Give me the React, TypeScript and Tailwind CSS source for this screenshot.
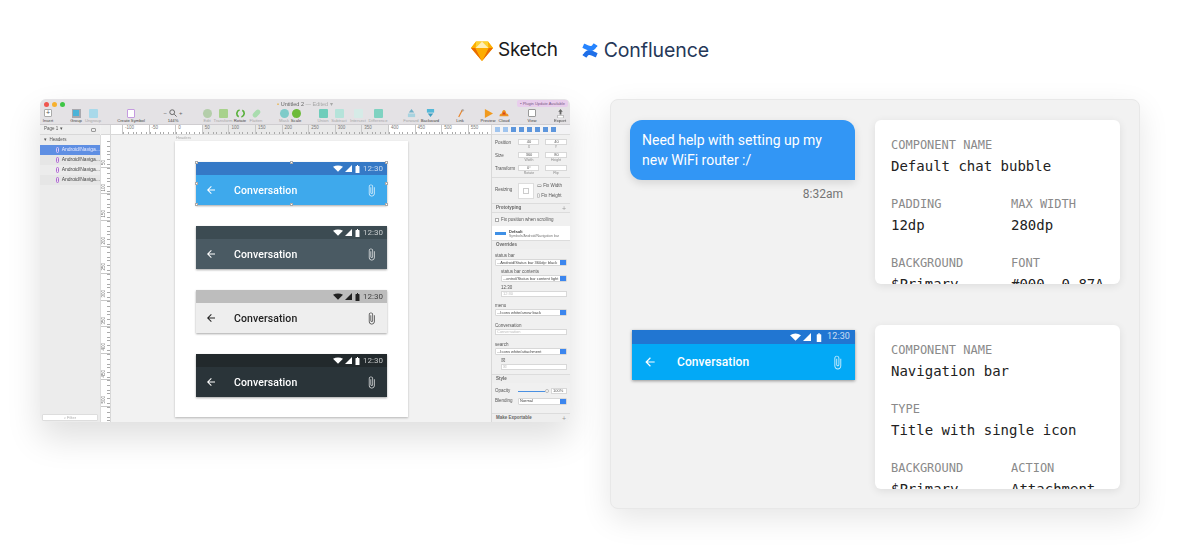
import React from "react";

const ATTACH = "M16.5 6v11.5c0 2.21-1.79 4-4 4s-4-1.79-4-4V5c0-1.38 1.12-2.5 2.5-2.5s2.5 1.12 2.5 2.5v10.5c0 .55-.45 1-1 1s-1-.45-1-1V6H10v9.5c0 1.38 1.12 2.5 2.5 2.5s2.5-1.12 2.5-2.5V5c0-2.21-1.79-4-4-4S7 2.79 7 5v12.5c0 3.04 2.46 5.5 5.5 5.5s5.5-2.46 5.5-5.5V6h-1.5z";
const BACK = "M20 11H7.83l5.59-5.59L12 4l-8 8 8 8 1.41-1.41L7.83 13H20v-2z";

function Ico({ d, c }: { d: string; c: string }) {
  return (
    <svg viewBox="0 0 24 24" className={c} fill="currentColor">
      <path d={d} />
    </svg>
  );
}

function SketchLogo() {
  return (
    <svg viewBox="0 0 22 20" className="w-[22px] h-[20px]">
      <polygon points="5,0.5 17,0.5 22,7 11,20 0,7" fill="#fdb300" />
      <polygon points="0,7 4.5,7 11,20" fill="#ea6c00" />
      <polygon points="22,7 17.5,7 11,20" fill="#ea6c00" />
      <polygon points="4.5,7 17.5,7 11,20" fill="#fdad00" />
      <polygon points="5,0.5 4.5,7 11,0.5" fill="#fdd231" />
      <polygon points="17,0.5 17.5,7 11,0.5" fill="#fdd231" />
      <polygon points="5,0.5 4.5,7 0,7" fill="#fdad00" />
      <polygon points="17,0.5 17.5,7 22,7" fill="#fdad00" />
      <polygon points="11,0.5 17.5,7 4.5,7" fill="#feeeb7" />
    </svg>
  );
}

function ConfluenceLogo() {
  const d = "M2.3 23.1c-.3.5-.7 1.1-1 1.6-.3.5-.1 1.1.4 1.4l6.4 3.9c.5.3 1.1.1 1.4-.3.3-.4.6-1 1-1.7 2.6-4.2 5.1-3.7 9.7-1.5l6.4 3c.5.2 1.1 0 1.4-.5l3-6.9c.2-.5 0-1.1-.5-1.3-1.4-.6-4-1.9-6.4-3-8.5-4.1-15.7-3.9-21.2 5.3z";
  return (
    <svg viewBox="0 0 32 32" className="w-[16px] h-[17px]">
      <path d={d} fill="#1f6fe8" />
      <path d={d} fill="#2684ff" transform="rotate(180 16 16)" />
    </svg>
  );
}

function SmallBar({ status, main, fg, dark }: { status: string; main: string; fg: string; dark?: boolean }) {
  return (
    <div className={`w-[191px] h-[43px] flex flex-col shadow-[0_1px_2px_rgba(0,0,0,0.35)] ${fg}`}>
      <div className={`h-[13px] flex items-center justify-end pr-[4px] ${status}`}>
        <svg viewBox="0 0 24 16" className="w-[10px] h-[7px] mr-[2px]" fill="currentColor"><path d="M0 4Q12 -3 24 4L12 16Z" /></svg>
        <svg viewBox="0 0 16 16" className="w-[7px] h-[7px] mr-[3px]" fill="currentColor"><path d="M0 16L16 0V16Z" /></svg>
        <svg viewBox="0 0 10 16" className="w-[5px] h-[8px] mr-[3px]" fill="currentColor"><path d="M2 2h2V0h2v2h2q1 0 1 1v13H1V3q0-1 1-1z" /></svg>
        <span className={`text-[8px] font-[Roboto,sans-serif] ${dark ? "opacity-80" : "opacity-70"}`}>12:30</span>
      </div>
      <div className={`flex-1 flex items-center ${main}`}>
        <Ico d={BACK} c="w-[12px] h-[12px] ml-[9px]" />
        <span className="ml-[17px] mt-[1px] text-[10.5px] font-medium font-[Roboto,sans-serif] tracking-[0.1px]">Conversation</span>
        <Ico d={ATTACH} c="w-[13px] h-[13px] ml-auto mr-[9px] opacity-80" />
      </div>
    </div>
  );
}

function BigBar() {
  return (
    <div className="ml-[2px] mt-[5px] w-[223px] h-[50px] flex flex-col text-white shadow-[0_1px_3px_rgba(0,0,0,0.4)]">
      <div className="h-[14px] bg-[#2176d2] flex items-center justify-end pr-[5px]">
        <svg viewBox="0 0 24 16" className="w-[11px] h-[8px] mr-[2px]" fill="currentColor"><path d="M0 4Q12 -3 24 4L12 16Z" /></svg>
        <svg viewBox="0 0 16 16" className="w-[8px] h-[8px] mr-[5px]" fill="currentColor"><path d="M0 16L16 0V16Z" /></svg>
        <svg viewBox="0 0 10 16" className="w-[6px] h-[9px] mr-[5px]" fill="currentColor"><path d="M2 2h2V0h2v2h2q1 0 1 1v13H1V3q0-1 1-1z" /></svg>
        <span className="text-[9px] font-[Roboto,sans-serif] opacity-75 tracking-[0.1px]">12:30</span>
      </div>
      <div className="flex-1 bg-[#03a9f6] flex items-center">
        <Ico d={BACK} c="w-[14px] h-[14px] ml-[11px]" />
        <span className="ml-[20px] text-[12px] font-medium font-[Roboto,sans-serif] tracking-[0.1px]">Conversation</span>
        <Ico d={ATTACH} c="w-[15px] h-[15px] ml-auto mr-[10px] opacity-80" />
      </div>
    </div>
  );
}

function Tool({ w, ml, label, strong, children }: { w: string; ml: string; label: string; strong?: boolean; children: React.ReactNode }) {
  return (
    <div className={`${w} ${ml} shrink-0 flex flex-col items-center`}>
      <div className="h-[10px] flex items-center justify-center">{children}</div>
      <span className={`text-[4.2px] leading-[5px] whitespace-nowrap ${strong ? "text-[#444]" : "text-[#a5a5a5]"}`}>{label}</span>
    </div>
  );
}

function Sq({ c, r }: { c: string; r?: string }) {
  return <div className={`w-[9px] h-[9px] ${c} ${r ?? "rounded-[1px]"}`} />;
}

function Toolbar() {
  return (
    <div className="flex h-[15px] items-start">
      <Tool w="w-[16px]" ml="ml-0" label="Insert" strong>
        <div className="w-[8px] h-[8px] bg-white border border-[#aaa] rounded-[1px] text-[7px] leading-[6px] text-center text-[#555]">+</div>
      </Tool>
      <Tool w="w-[16px]" ml="ml-[12px]" label="Group" strong><div className="w-[9px] h-[9px] bg-[#a8a8ae] p-[1.5px]"><div className="w-full h-full bg-[#4bb3d8]" /></div></Tool>
      <Tool w="w-[16px]" ml="ml-[1px]" label="Ungroup"><Sq c="bg-[#a9d9ea]" /></Tool>
      <Tool w="w-[32px]" ml="ml-[14px]" label="Create Symbol" strong><div className="w-[8px] h-[9px] bg-white border border-[#c59be0] rounded-[1px]" /></Tool>
      <Tool w="w-[32px]" ml="ml-[10px]" label="144%" strong>
        <div className="flex items-center gap-[2px] text-[#666] text-[6px] leading-none">
          <span>−</span>
          <svg viewBox="0 0 10 10" className="w-[8px] h-[8px]" fill="none" stroke="#666" strokeWidth="1.2"><circle cx="4" cy="4" r="3" /><path d="M6.5 6.5L9.5 9.5" /></svg>
          <span>+</span>
        </div>
      </Tool>
      <Tool w="w-[16px]" ml="ml-[10px]" label="Edit"><Sq c="bg-[#b4ceaa]" r="rounded-full" /></Tool>
      <Tool w="w-[16px]" ml="ml-0" label="Transform"><Sq c="bg-[#a8d28c]" /></Tool>
      <Tool w="w-[16px]" ml="ml-[1px]" label="Rotate" strong>
        <svg viewBox="0 0 10 10" className="w-[9px] h-[9px]" fill="none" stroke="#58b03a" strokeWidth="1.8"><path d="M4 1.2A4 4 0 0 0 3 8.6M6 8.8A4 4 0 0 0 7 1.4" /></svg>
      </Tool>
      <Tool w="w-[16px]" ml="ml-0" label="Flatten"><div className="w-[9px] h-[5px] bg-[#a9dcae] rounded-full -rotate-45" /></Tool>
      <Tool w="w-[12px]" ml="ml-[14px]" label="Mask"><Sq c="bg-[#7fcbc9]" r="rounded-full" /></Tool>
      <Tool w="w-[12px]" ml="ml-0" label="Scale" strong><Sq c="bg-[#6dbb3a]" r="rounded-full" /></Tool>
      <Tool w="w-[16px]" ml="ml-[13px]" label="Union"><Sq c="bg-[#6fcdbb]" /></Tool>
      <Tool w="w-[16px]" ml="ml-0" label="Subtract"><Sq c="bg-[#b5e3da]" /></Tool>
      <Tool w="w-[16px]" ml="ml-[3px]" label="Intersect"><Sq c="bg-[#d6ebe7]" /></Tool>
      <Tool w="w-[16px]" ml="ml-[4px]" label="Difference"><Sq c="bg-[#7fd2c1]" /></Tool>
      <Tool w="w-[16px]" ml="ml-[17px]" label="Forward">
        <svg viewBox="0 0 10 10" className="w-[9px] h-[9px]"><path d="M5 0L8 4H2Z" fill="#6fb1c9" /><rect x="1" y="5" width="8" height="4" fill="#a8d3e0" /></svg>
      </Tool>
      <Tool w="w-[16px]" ml="ml-[3px]" label="Backward" strong>
        <svg viewBox="0 0 10 10" className="w-[9px] h-[9px]"><rect x="1" y="0" width="8" height="4" fill="#54b8d8" /><path d="M5 9L8 5H2Z" fill="#3d9dc0" /></svg>
      </Tool>
      <Tool w="w-[16px]" ml="ml-[14px]" label="Link" strong>
        <svg viewBox="0 0 10 10" className="w-[9px] h-[9px]" fill="none" strokeWidth="1.3"><path d="M3 9L7 1" stroke="#e8842a" /><circle cx="7.5" cy="1.5" r="1" stroke="#888" strokeWidth="0.6" /></svg>
      </Tool>
      <Tool w="w-[16px]" ml="ml-[12px]" label="Preview" strong>
        <svg viewBox="0 0 10 10" className="w-[9px] h-[9px]"><path d="M1 0L10 5L1 10Z" fill="#f09a1f" /></svg>
      </Tool>
      <Tool w="w-[16px]" ml="ml-0" label="Cloud" strong>
        <svg viewBox="0 0 10 10" className="w-[10px] h-[9px]"><path d="M0 8Q0 5 2.5 5Q3 1 5 1Q7 1 7.5 5Q10 5 10 8Z" fill="#ee9221" /><path d="M5 3L7 6H3Z" fill="#d8431f" /></svg>
      </Tool>
      <Tool w="w-[16px]" ml="ml-[12px]" label="View" strong><div className="w-[8px] h-[8px] bg-white border border-[#999] rounded-[1px]" /></Tool>
      <Tool w="w-[16px]" ml="ml-[12px]" label="Export" strong>
        <svg viewBox="0 0 10 10" className="w-[9px] h-[9px]" fill="#666"><path d="M5 0L7.5 3H6V6H4V3H2.5Z" /><rect x="2" y="7" width="6" height="3" fill="#fff" stroke="#888" strokeWidth="0.5" /></svg>
      </Tool>
    </div>
  );
}

const H_RULER: [string, string][] = [
  ["-100", "bg-white"], ["-50", "bg-white"], ["0", "bg-white"], ["50", "bg-[#e9e9e9]"], ["100", "bg-[#e9e9e9]"], ["150", "bg-[#e9e9e9]"], ["200", "bg-[#e9e9e9]"],
  ["250", "bg-[#e9e9e9]"], ["300", "bg-[#e9e9e9]"], ["350", "bg-[#e9e9e9]"], ["400", "bg-white"], ["450", "bg-white"], ["500", "bg-white"], ["550", "bg-white"],
];

function HRuler() {
  return (
    <div className="flex-1 h-[10px] flex overflow-hidden bg-white border-b border-[#d8d8d8] pl-[11px]">
      {H_RULER.map(([t, c]) => (
        <div key={t} className={`w-[26.6px] shrink-0 h-full relative border-l border-[#c8c8c8] ${c}`}>
          <span className="block text-[4.5px] leading-[6px] pl-[2px] text-[#777]">{t}</span>
          <div className="absolute left-0 right-0 bottom-0 h-[2px] bg-[repeating-linear-gradient(90deg,#aaa_0,#aaa_0.6px,transparent_0.6px,transparent_2.6px)]" />
        </div>
      ))}
    </div>
  );
}

function VRuler() {
  const labels = ["50", "100", "150", "200", "250", "300", "350", "400", "450", "500", ""];
  return (
    <div className="w-[10px] shrink-0 bg-white border-r border-[#d8d8d8] overflow-hidden pt-[6px]">
      {labels.map((t) => (
        <div key={t} className="h-[26.6px] border-b border-[#c8c8c8] relative flex flex-col justify-end">
          <span className="block text-[4.5px] leading-[6px] text-[#777] [writing-mode:vertical-rl] rotate-180 pt-[2px]">{t}</span>
          <div className="absolute top-0 bottom-0 right-0 w-[3px] bg-[repeating-linear-gradient(180deg,#aaa_0,#aaa_0.6px,transparent_0.6px,transparent_2.6px)]" />
        </div>
      ))}
    </div>
  );
}

function LayerRow({ sel, alt }: { sel?: boolean; alt?: boolean }) {
  return (
    <div className={`h-[10px] flex items-center pl-[16px] ${sel ? "bg-[#5f8fe3]" : alt ? "bg-[#e6e6e6]" : ""}`}>
      <div className={`w-[5px] h-[6px] rounded-[1.5px] border ${sel ? "border-[#d9c3ff]" : "border-[#b264d8]"}`} />
      <span className={`ml-[3px] text-[5px] whitespace-nowrap ${sel ? "text-[#eef]" : "text-[#444]"}`}>Android/Naviga...</span>
    </div>
  );
}

function Sidebar() {
  return (
    <div className="w-[61px] shrink-0 bg-[#ececec] border-r border-[#dcdcdc] flex flex-col">
      <div className="h-[10px] -mt-[10px] flex items-center justify-between px-[4px] bg-[#eeeeee] border-b border-[#d8d8d8]">
        <span className="text-[4.5px] text-[#555]">Page 1 ▾</span>
        <div className="w-[5px] h-[4px] border border-[#999] rounded-[1px]" />
      </div>
      <div className="h-[10px] flex items-center pl-[4px] text-[4.5px] text-[#555]">▾&nbsp;&nbsp;Headers</div>
      <LayerRow sel />
      <LayerRow alt />
      <LayerRow />
      <LayerRow alt />
      <div className="mt-auto mb-[1px] mx-[2px] h-[7px] bg-white border border-[#ddd] rounded-[1px] flex items-center justify-center text-[4px] text-[#aaa]">⌕ Filter</div>
    </div>
  );
}

function Field({ w, v, dim }: { w: string; v: string; dim?: boolean }) {
  return <div className={`${w} h-[6px] bg-white border border-[#d8d8d8] text-[4px] leading-[4px] pl-[1px] whitespace-nowrap overflow-hidden ${dim ? "text-[#bbb]" : "text-[#555]"}`}>{v}</div>;
}

function Select({ w, v }: { w: string; v: string }) {
  return (
    <div className={`${w} h-[7px] bg-white border border-[#d8d8d8] flex items-center rounded-[1px] overflow-hidden`}>
      <span className="flex-1 pl-[1px] text-[4px] text-[#444] whitespace-nowrap overflow-hidden">{v}</span>
      <div className="w-[6px] h-full bg-[#3c86ee] shrink-0" />
    </div>
  );
}

function Sec({ t, plus }: { t: string; plus?: boolean }) {
  return (
    <div className="h-[9px] flex items-center justify-between px-[4px] border-t border-[#dcdcdc] bg-[#eeeeee]">
      <span className="text-[4.5px] font-bold text-[#666]">{t}</span>
      {plus && <span className="text-[7px] leading-none text-[#999]">+</span>}
    </div>
  );
}

function Tiny({ t, c }: { t: string; c?: string }) {
  return <div className={`text-[4.5px] leading-[7px] text-[#555] whitespace-nowrap ${c ?? ""}`}>{t}</div>;
}

function PropRow({ l, a, b, sa, sb }: { l: string; a: string; b: string; sa: string; sb: string }) {
  return (
    <div className="h-[13px] flex px-[3px] pt-[1px]">
      <span className="w-[23px] text-[4.5px] leading-[7px] text-[#555]">{l}</span>
      <div className="w-[22px] text-center">
        <Field w="w-[21px]" v={a} />
        <div className="text-[3.5px] leading-[5px] text-[#888]">{sa}</div>
      </div>
      <div className="w-[22px] ml-[5px] text-center">
        <Field w="w-[22px]" v={b} />
        <div className="text-[3.5px] leading-[5px] text-[#888]">{sb}</div>
      </div>
    </div>
  );
}

function Inspector() {
  return (
    <div className="w-[79px] shrink-0 bg-[#f0f0f0] border-l border-[#d8d8d8] flex flex-col -mt-[10px] overflow-hidden">
      <div className="h-[10px] flex items-center gap-[3px] px-[3px] border-b border-[#dcdcdc] bg-[#f3f3f5]">
        {["bg-[#9fc4ee]", "bg-[#9fc4ee]", "bg-[#5d96dc]", "bg-[#5d96dc]", "bg-[#5d96dc]", "bg-[#5d96dc]", "bg-[#5d96dc]", "bg-[#5d96dc]"].map((c, i) => (
          <div key={i} className={`w-[5px] h-[5px] ${c}`} />
        ))}
      </div>
      <div className="h-[3px]" />
      <PropRow l="Position" a="40" b="40" sa="X" sb="Y" />
      <PropRow l="Size" a="360" b="80" sa="Width" sb="Height" />
      <PropRow l="Transform" a="0°" b="" sa="Rotate" sb="Flip" />
      <div className="h-[26px] flex items-center px-[3px] border-t border-[#dcdcdc]">
        <span className="w-[23px] text-[4.5px] text-[#555]">Resizing</span>
        <div className="w-[16px] h-[16px] bg-white border border-[#ddd] flex items-center justify-center">
          <div className="w-[6px] h-[6px] border border-[#ccc]" />
        </div>
        <div className="ml-[3px] flex flex-col gap-[3px]">
          <Tiny t="▭  Fix Width" />
          <Tiny t="▯  Fix Height" />
        </div>
      </div>
      <Sec t="Prototyping" plus />
      <div className="h-[14px] flex items-center px-[3px] gap-[2px] border-t border-[#dcdcdc]">
        <div className="w-[4px] h-[4px] bg-white border border-[#aaa]" />
        <Tiny t="Fix position when scrolling" />
      </div>
      <div className="h-[14px] bg-white flex items-center pl-[3px] gap-[3px]">
        <div className="w-[11px] h-[3px] bg-[#3f90e6]" />
        <div>
          <div className="text-[4px] leading-[5px] font-bold text-[#444]">Default</div>
          <div className="text-[3.5px] leading-[4px] text-[#777] whitespace-nowrap">Symbols/Android/Navigation bar</div>
        </div>
      </div>
      <Sec t="Overrides" />
      <div className="px-[3px] pt-[3px] flex flex-col">
        <Tiny t="status bar" />
        <Select w="w-[72px]" v="...Android/Status bar 360dp: black" />
        <div className="pl-[6px] mt-[2px]">
          <Tiny t="status bar contents" />
          <Select w="w-[66px]" v="...ontrol/Status bar content light" />
          <Tiny t="12:30" c="mt-[2px]" />
          <Field w="w-[66px]" v="12:30" dim />
        </div>
        <Tiny t="menu" c="mt-[5px]" />
        <Select w="w-[72px]" v="...Icons white/arrow back" />
        <Tiny t="Conversation" c="mt-[6px]" />
        <Field w="w-[72px]" v="Conversation" dim />
        <Tiny t="search" c="mt-[6px]" />
        <Select w="w-[72px]" v="...Icons white/attachment" />
        <div className="pl-[6px] mt-[2px]">
          <Tiny t="☒" />
          <Field w="w-[66px]" v="☒" dim />
        </div>
      </div>
      <div className="mt-[4px]"><Sec t="Style" /></div>
      <div className="h-[10px] flex items-center px-[3px] mt-[3px]">
        <span className="w-[23px] text-[4.5px] text-[#555]">Opacity</span>
        <div className="w-[27px] h-[1px] bg-[#4a90e2]" />
        <div className="w-[4px] h-[4px] rounded-full bg-white border border-[#bbb]" />
        <div className="ml-[2px]"><Field w="w-[16px]" v="100%" /></div>
      </div>
      <div className="h-[10px] flex items-center px-[3px]">
        <span className="w-[23px] text-[4.5px] text-[#555]">Blending</span>
        <Select w="w-[49px]" v="Normal" />
      </div>
      <div className="mt-auto"><Sec t="Make Exportable" plus /></div>
    </div>
  );
}

function Handle({ c }: { c: string }) {
  return <div className={`absolute w-[3px] h-[3px] bg-white border border-[#aaa] ${c}`} />;
}

function SketchWindow() {
  return (
    <div className="w-[530px] h-[323px] rounded-[6px] shadow-[0_16px_34px_rgba(0,0,0,0.13)]">
      <div className="w-full h-full rounded-[6px] overflow-hidden flex flex-col bg-[#f2f2f2] font-['Liberation_Sans',sans-serif] blur-[0.3px]">
        <div className="h-[26px] shrink-0 bg-[#e4e2e5] border-b border-[#cfcdd0] flex flex-col">
          <div className="h-[9px] relative flex items-center justify-center pt-[1px]">
            <div className="absolute left-[4px] top-[3px] flex gap-[3px]">
              <div className="w-[5px] h-[5px] rounded-full bg-[#f0564f]" />
              <div className="w-[5px] h-[5px] rounded-full bg-[#f7b12e]" />
              <div className="w-[5px] h-[5px] rounded-full bg-[#3ec645]" />
            </div>
            <span className="text-[5.5px] text-[#666] whitespace-nowrap"><span className="text-[#e8b34c]">▪</span> Untitled 2 <span className="text-[#a8a8a8]">— Edited ▾</span></span>
            <div className="absolute right-[2px] top-[1px] h-[7px] w-[51px] rounded-[2px] bg-[#e8cdec] text-[4px] leading-[7px] text-center text-[#7a5a85] whitespace-nowrap">▪ Plugin Update Available</div>
          </div>
          <Toolbar />
        </div>
        <div className="h-[10px] shrink-0 flex">
          <div className="w-[61px] shrink-0" />
          <div className="w-[10px] shrink-0 bg-[#f0f0f0] border-b border-r border-[#d8d8d8]" />
          <HRuler />
          <div className="w-[79px] shrink-0" />
        </div>
        <div className="flex-1 flex min-h-0">
          <Sidebar />
          <VRuler />
          <div className="flex-1 min-w-0 pl-[64px]">
            <div className="h-[6px] text-[4px] leading-[5px] text-[#aaa] pl-[1px]">Headers</div>
            <div className="w-[233px] h-[276px] bg-white shadow-[0_1px_2px_rgba(0,0,0,0.25)] pl-[21px] pt-[21px] flex flex-col gap-[21px]">
              <div className="relative w-[191px]">
                <SmallBar status="bg-[#3579c6]" main="bg-[#3ea9ec]" fg="text-white" />
                <Handle c="-left-[1px] -top-[1px]" />
                <Handle c="left-[94px] -top-[1px]" />
                <Handle c="-right-[1px] -top-[1px]" />
                <Handle c="-left-[1px] top-[20px]" />
                <Handle c="-right-[1px] top-[20px]" />
                <Handle c="-left-[1px] -bottom-[1px]" />
                <Handle c="left-[94px] -bottom-[1px]" />
                <Handle c="-right-[1px] -bottom-[1px]" />
              </div>
              <SmallBar status="bg-[#3c4b52]" main="bg-[#4a5a63]" fg="text-white" />
              <SmallBar status="bg-[#bdbdbd]" main="bg-[#eeeeee]" fg="text-[#222]" dark />
              <SmallBar status="bg-[#22292c]" main="bg-[#2a3439]" fg="text-white" />
            </div>
          </div>
          <Inspector />
        </div>
      </div>
    </div>
  );
}

function Meta({ l, v, w }: { l: string; v: string; w?: string }) {
  return (
    <div className={w ?? ""}>
      <div className="text-[12px] leading-[22px] text-[#8a8a8a] whitespace-nowrap">{l}</div>
      <div className="text-[14px] leading-[20px] text-[#222] whitespace-nowrap">{v}</div>
    </div>
  );
}

function Card({ children }: { children: React.ReactNode }) {
  return (
    <div className="w-[245px] h-[164px] shrink-0 bg-white rounded-[6px] shadow-[0_2px_8px_rgba(0,0,0,0.09)] overflow-hidden pl-[16px] pt-[14px] flex flex-col gap-[17px] font-['DejaVu_Sans_Mono',monospace]">
      {children}
    </div>
  );
}

export default function App() {
  return (
    <div className="w-[1180px] h-[549px] bg-white overflow-hidden font-[Roboto,sans-serif]">
      <div className="h-[99px] flex items-center justify-center pt-[2px]">
        <SketchLogo />
        <span className="ml-[5px] text-[19px] text-[#1a1a1a] font-['Inter',sans-serif] tracking-[-0.3px]">Sketch</span>
        <div className="ml-[24px]"><ConfluenceLogo /></div>
        <span className="ml-[6px] text-[19.5px] text-[#253858] font-['Inter',sans-serif] tracking-[-0.1px]">Confluence</span>
      </div>
      <div className="flex gap-[40px] px-[40px]">
        <SketchWindow />
        <div className="w-[530px] h-[410px] bg-[#f2f2f2] rounded-[8px] border border-[#e8e8e8] shadow-[0_10px_30px_rgba(0,0,0,0.1)] pl-[19px] pt-[20px] flex flex-col gap-[41px]">
          <div className="flex gap-[20px]">
            <div className="w-[225px]">
              <div className="h-[60px] bg-[#3296f5] rounded-t-[12px] rounded-bl-[12px] shadow-[0_3px_8px_rgba(0,0,0,0.12)] px-[12px] py-[10px] text-white text-[14px] leading-[20px]">
                Need help with setting up my new WiFi router :/
              </div>
              <div className="mt-[6px] pr-[12px] text-right text-[12px] leading-[16px] text-[#757575]">8:32am</div>
            </div>
            <Card>
              <Meta l="COMPONENT NAME" v="Default chat bubble" />
              <div className="flex"><Meta l="PADDING" v="12dp" w="w-[120px]" /><Meta l="MAX WIDTH" v="280dp" /></div>
              <div className="flex"><Meta l="BACKGROUND" v="$Primary" w="w-[120px]" /><Meta l="FONT" v="#000, 0.87A" /></div>
            </Card>
          </div>
          <div className="flex gap-[20px]">
            <div className="w-[225px]"><BigBar /></div>
            <Card>
              <Meta l="COMPONENT NAME" v="Navigation bar" />
              <Meta l="TYPE" v="Title with single icon" />
              <div className="flex"><Meta l="BACKGROUND" v="$Primary" w="w-[120px]" /><Meta l="ACTION" v="Attachment" /></div>
            </Card>
          </div>
        </div>
      </div>
    </div>
  );
}
